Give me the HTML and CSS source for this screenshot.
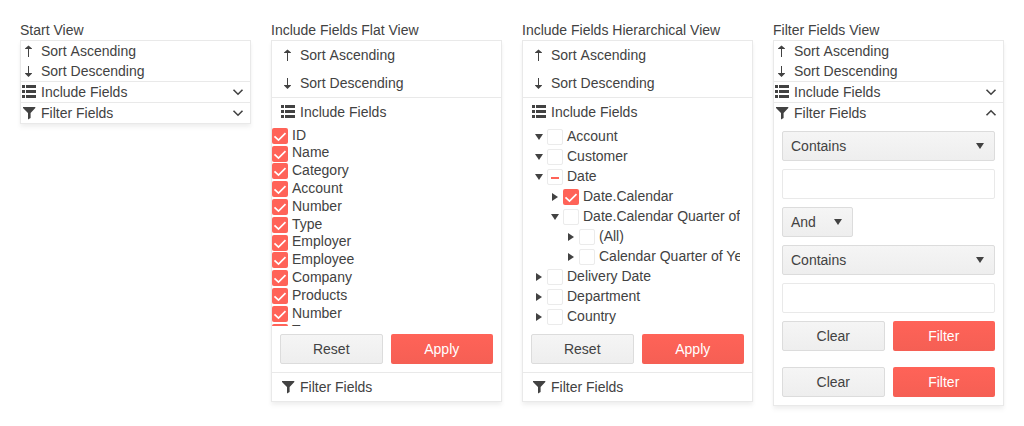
FILE: index.html
```html
<!DOCTYPE html>
<html lang="en">
<head>
<meta charset="utf-8">
<title>Field menu views</title>
<link rel="stylesheet" href="styles.css">
</head>
<body>
<svg class="sprite" aria-hidden="true">
  <symbol id="up" viewBox="0 0 16 16"><path d="M7 14V6H4V5.500L7.500 2.500L11 5.500V6H8v8z"/></symbol>
  <symbol id="down" viewBox="0 0 16 16"><path d="M7 3v7H4v.5L7.500 14L11 10.500V10H8V3z"/></symbol>
  <symbol id="list" viewBox="0 0 16 16"><path d="M1 1h3v3H1zM5 1h10v3H5zM1 6h3v3H1zM5 6h10v3H5zM1 11h3v3H1zM5 11h10v3H5z"/></symbol>
  <symbol id="funnel" viewBox="0 0 16 16"><path d="M2 2h12.300v1L9.600 8v5L7 14.600V8L2 3z"/></symbol>
  <symbol id="chevron" viewBox="0 0 16 16"><path d="M3.500 5.700L8 10.200l4.500-4.500" fill="none" stroke="currentColor" stroke-width="1.600"/></symbol>
  <symbol id="tri-down" viewBox="0 0 16 16"><path d="M4 5h8l-4 6z"/></symbol>
  <symbol id="tri-right" viewBox="0 0 16 16"><path d="M5 4v8l6-4z"/></symbol>
  <symbol id="tick" viewBox="0 0 16 16"><path d="M2.500 8.300L6.500 12L13.500 5.200" fill="none" stroke="currentColor" stroke-width="1.700"/></symbol>
</svg>
<main class="views">
  <section class="view">
    <h2 class="title">Start View</h2>
    <div class="menu">
      <div class="row"><svg class="icon"><use href="#up"/></svg><span class="loose">Sort Ascending</span></div>
      <div class="row"><svg class="icon"><use href="#down"/></svg><span>Sort Descending</span></div>
      <div class="row divided"><svg class="icon"><use href="#list"/></svg><span>Include Fields</span><svg class="icon toggle"><use href="#chevron"/></svg></div>
      <div class="row divided"><svg class="icon"><use href="#funnel"/></svg><span>Filter Fields</span><svg class="icon toggle"><use href="#chevron"/></svg></div>
    </div>
  </section>

  <section class="view">
    <h2 class="title">Include Fields Flat View</h2>
    <div class="menu roomy">
      <div class="row"><svg class="icon"><use href="#up"/></svg><span class="loose">Sort Ascending</span></div>
      <div class="row"><svg class="icon"><use href="#down"/></svg><span>Sort Descending</span></div>
      <div class="row divided"><svg class="icon"><use href="#list"/></svg><span>Include Fields</span></div>
      <ul class="flat">
        <li class="field"><svg class="check on"><use href="#tick"/></svg><span class="name">ID</span></li>
        <li class="field"><svg class="check on"><use href="#tick"/></svg><span class="name">Name</span></li>
        <li class="field"><svg class="check on"><use href="#tick"/></svg><span class="name">Category</span></li>
        <li class="field"><svg class="check on"><use href="#tick"/></svg><span class="name">Account</span></li>
        <li class="field"><svg class="check on"><use href="#tick"/></svg><span class="name">Number</span></li>
        <li class="field"><svg class="check on"><use href="#tick"/></svg><span class="name">Type</span></li>
        <li class="field"><svg class="check on"><use href="#tick"/></svg><span class="name">Employer</span></li>
        <li class="field"><svg class="check on"><use href="#tick"/></svg><span class="name">Employee</span></li>
        <li class="field"><svg class="check on"><use href="#tick"/></svg><span class="name">Company</span></li>
        <li class="field"><svg class="check on"><use href="#tick"/></svg><span class="name">Products</span></li>
        <li class="field"><svg class="check on"><use href="#tick"/></svg><span class="name">Number</span></li>
        <li class="field"><svg class="check on"><use href="#tick"/></svg><span class="name">Type</span></li>
      </ul>
      <div class="actions"><button class="btn">Reset</button><button class="btn primary">Apply</button></div>
      <div class="row divided"><svg class="icon"><use href="#funnel"/></svg><span>Filter Fields</span></div>
    </div>
  </section>

  <section class="view">
    <h2 class="title">Include Fields Hierarchical View</h2>
    <div class="menu roomy">
      <div class="row"><svg class="icon"><use href="#up"/></svg><span class="loose">Sort Ascending</span></div>
      <div class="row"><svg class="icon"><use href="#down"/></svg><span>Sort Descending</span></div>
      <div class="row divided"><svg class="icon"><use href="#list"/></svg><span>Include Fields</span></div>
      <ul class="tree">
        <li class="node"><svg class="icon"><use href="#tri-down"/></svg><span class="check"></span><span>Account</span></li>
        <li class="node"><svg class="icon"><use href="#tri-down"/></svg><span class="check"></span><span>Customer</span></li>
        <li class="node"><svg class="icon"><use href="#tri-down"/></svg><span class="check partial"></span><span>Date</span></li>
        <li class="node level-2"><svg class="icon"><use href="#tri-right"/></svg><svg class="check on"><use href="#tick"/></svg><span>Date.Calendar</span></li>
        <li class="node level-2"><svg class="icon"><use href="#tri-down"/></svg><span class="check"></span><span>Date.Calendar Quarter of Year</span></li>
        <li class="node level-3"><svg class="icon"><use href="#tri-right"/></svg><span class="check"></span><span>(All)</span></li>
        <li class="node level-3"><svg class="icon"><use href="#tri-right"/></svg><span class="check"></span><span>Calendar Quarter of Year</span></li>
        <li class="node"><svg class="icon"><use href="#tri-right"/></svg><span class="check"></span><span>Delivery Date</span></li>
        <li class="node"><svg class="icon"><use href="#tri-right"/></svg><span class="check"></span><span>Department</span></li>
        <li class="node"><svg class="icon"><use href="#tri-right"/></svg><span class="check"></span><span>Country</span></li>
      </ul>
      <div class="actions"><button class="btn">Reset</button><button class="btn primary">Apply</button></div>
      <div class="row divided"><svg class="icon"><use href="#funnel"/></svg><span>Filter Fields</span></div>
    </div>
  </section>

  <section class="view">
    <h2 class="title">Filter Fields View</h2>
    <div class="menu">
      <div class="row"><svg class="icon"><use href="#up"/></svg><span class="loose">Sort Ascending</span></div>
      <div class="row"><svg class="icon"><use href="#down"/></svg><span>Sort Descending</span></div>
      <div class="row divided"><svg class="icon"><use href="#list"/></svg><span>Include Fields</span><svg class="icon toggle"><use href="#chevron"/></svg></div>
      <div class="row divided"><svg class="icon"><use href="#funnel"/></svg><span>Filter Fields</span><svg class="icon toggle open"><use href="#chevron"/></svg></div>
      <form class="filter">
        <div class="select"><span>Contains</span><svg class="icon"><use href="#tri-down"/></svg></div>
        <input class="input" type="text" aria-label="First value">
        <div class="select short"><span>And</span><svg class="icon"><use href="#tri-down"/></svg></div>
        <div class="select"><span>Contains</span><svg class="icon"><use href="#tri-down"/></svg></div>
        <input class="input" type="text" aria-label="Second value">
      </form>
      <div class="actions flush"><button class="btn">Clear</button><button class="btn primary">Filter</button></div>
      <div class="actions"><button class="btn">Clear</button><button class="btn primary">Filter</button></div>
    </div>
  </section>
</main>
</body>
</html>
```
FILE: styles.css
```css
* { box-sizing: border-box; }

body {
  margin: 0;
  background: #fff;
  color: #424242;
  font: 14px/20px "Liberation Sans", Arial, sans-serif;
}

ul { margin: 0; padding: 0; list-style: none; }

.sprite { display: none; }

.views {
  display: grid;
  grid-template-columns: repeat(4, 231px);
  gap: 20px;
  align-items: start;
  padding: 20px;
}

.title { margin: 0; font-size: 14px; font-weight: 400; }

.menu {
  border: 1px solid #e9e9e9;
  box-shadow: 0 2px 4px rgba(0, 0, 0, 0.03), 0 4px 5px rgba(0, 0, 0, 0.04);
}

.row { display: flex; align-items: center; gap: 4px; }
.divided { border-top: 1px solid #e9e9e9; }
.roomy .row { padding: 4px 8px; }
.loose { word-spacing: 0.8px; }

.icon { width: 16px; height: 16px; flex: none; fill: currentColor; }
.toggle { margin-left: auto; margin-right: 4px; }
.open { transform: scaleY(-1); }

.check {
  flex: none;
  width: 16px;
  height: 16px;
  border: 1px solid #ebebeb;
  border-radius: 2px;
  background: #fff;
}
.on { border: 0; background: #ff6358; color: #fff; }
.partial { display: grid; place-items: center; padding-top: 2px; }
.partial::before { content: ""; width: 8px; height: 2px; background: #ff6358; }

.flat { height: 200px; overflow: hidden; }
.field { display: flex; gap: 4px; height: 17.8px; }
.field .check { margin-top: 1.8px; }
.name { margin-top: -1.45px; }

.tree { height: 200px; margin: 0 12px 0 8px; overflow: hidden; }
.node { display: flex; align-items: center; height: 20px; white-space: nowrap; }
.node .check { margin: 2px 4px 0 0; }
.node .icon { margin-top: 2px; }
.level-2 { padding-left: 16px; }
.level-3 { padding-left: 32px; }

.actions { display: grid; grid-template-columns: 1fr 1fr; gap: 8px; padding: 8px; }
.flush { padding-top: 0; }

.btn {
  height: 30px;
  padding: 0;
  border: 1px solid #dcdcdc;
  border-radius: 2px;
  background: linear-gradient(#f5f5f5, #eee);
  color: inherit;
  font: inherit;
}
.primary { border-color: transparent; background: linear-gradient(#ff6358, #f55f54) border-box; color: #fff; }

.filter { display: flex; flex-direction: column; gap: 8px; padding: 8px; }
.select {
  display: flex;
  align-items: center;
  justify-content: space-between;
  height: 30px;
  padding: 0 6px 0 8px;
  border: 1px solid #dcdcdc;
  border-radius: 2px;
  background: linear-gradient(#f5f5f5, #eee);
}
.short { width: 71px; }
.input { width: 100%; height: 30px; border: 1px solid #e9e9e9; border-radius: 2px; background: #fff; }
```
